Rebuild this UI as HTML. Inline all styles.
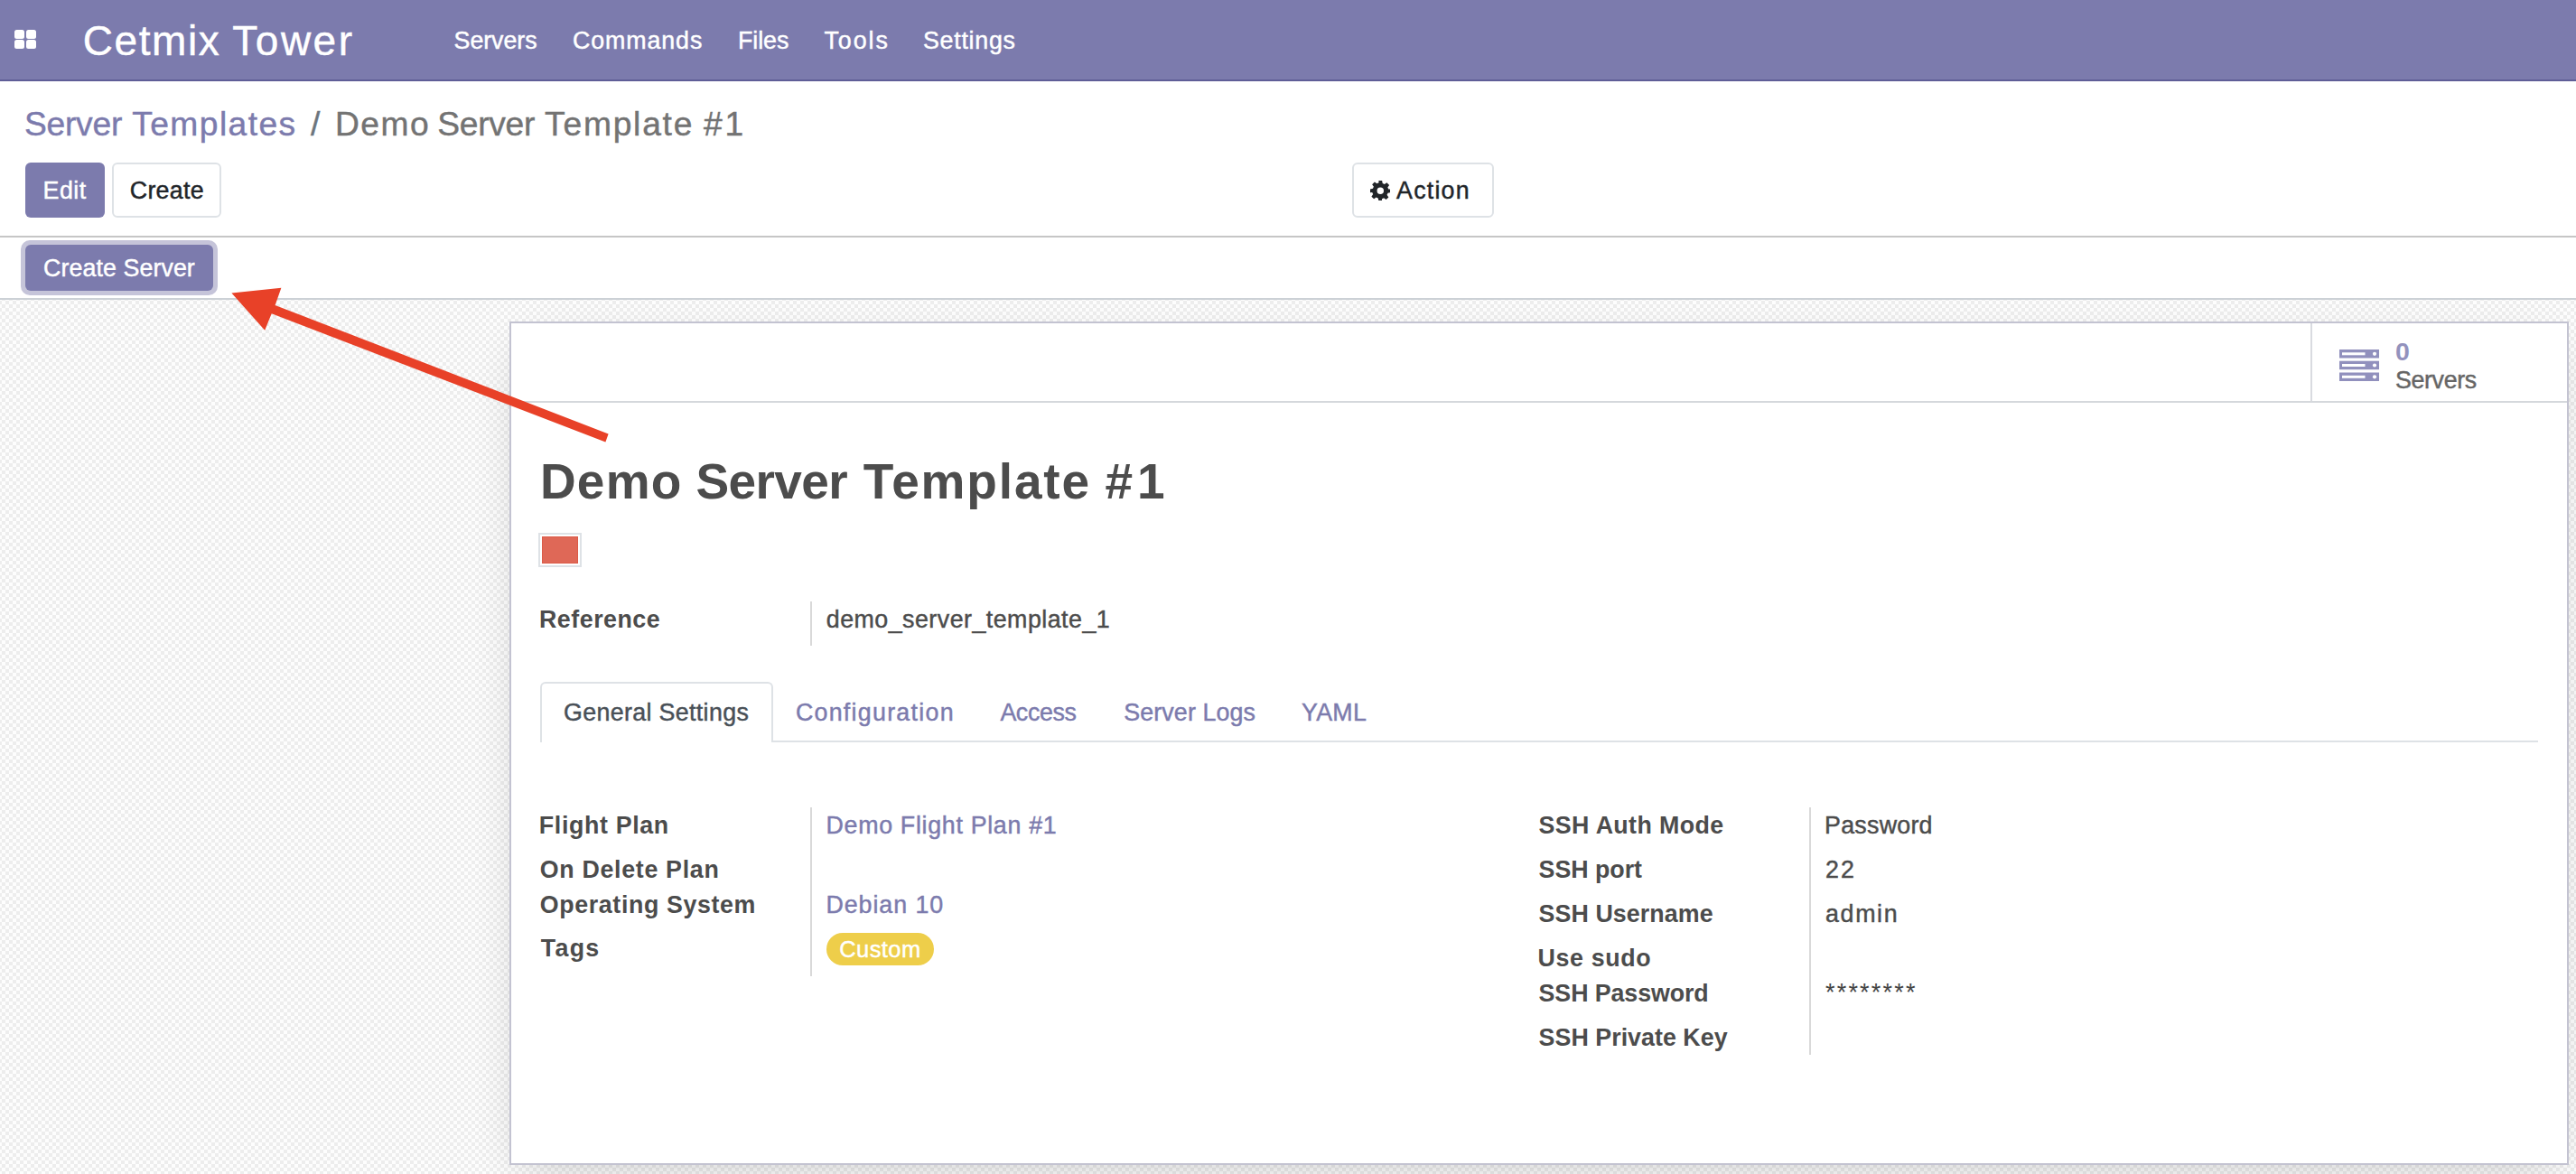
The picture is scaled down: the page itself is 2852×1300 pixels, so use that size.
<!DOCTYPE html>
<html><head><meta charset="utf-8"><title>Demo Server Template #1</title>
<style>
html,body{margin:0;padding:0}
body{width:2852px;height:1300px;overflow:hidden;position:relative;background:#fff;font-family:"Liberation Sans",sans-serif}
.t{position:absolute;white-space:pre;font-family:"Liberation Sans",sans-serif;z-index:5;-webkit-text-stroke:0.45px currentColor}
.a{position:absolute}
#nav{left:0;top:0;width:2852px;height:88px;background:#7C7BAD;border-bottom:2px solid #5F5E97}
.sq{position:absolute;background:#fff;border-radius:2.5px;width:11px;height:10px}
#bgw{left:0;top:332px;width:2852px;height:968px;overflow:hidden}
#bg{left:-8px;top:-8px;width:2868px;height:984px;
 background-color:#fdfdfd;
 background-image:conic-gradient(#ededed 25%,#fdfdfd 0 50%,#ededed 0 75%,#fdfdfd 0);
 background-size:8px 8px;background-position:2px 1px}
.btn{position:absolute;box-sizing:border-box;border-radius:6px}
#sheet{left:564px;top:356px;width:2280px;height:934px;box-sizing:border-box;background:#fff;border:2px solid #c3c3d1;box-shadow:0 17px 51px -17px rgba(0,0,0,.2)}

</style></head><body>
<div class="a" id="nav"></div>
<div class="sq" style="left:16px;top:33px"></div>
<div class="sq" style="left:29px;top:33px"></div>
<div class="sq" style="left:16px;top:44px"></div>
<div class="sq" style="left:29px;top:44px"></div>
<div class="a" style="left:0;top:261px;width:2852px;height:2px;background:#c6c6c6"></div>
<div class="a" style="left:0;top:330px;width:2852px;height:2px;background:#ccd1d6"></div>
<div class="a" id="bgw"><div class="a" id="bg"></div></div>
<div class="btn" style="left:28px;top:180px;width:88px;height:61px;background:#7C7BAD"></div>
<div class="btn" style="left:124px;top:180px;width:121px;height:61px;border:2px solid #dee2e6;background:#fff"></div>
<div class="btn" style="left:1497px;top:180px;width:157px;height:61px;border:2px solid #dee2e6;background:#fff"></div>
<svg class="a" style="left:1516.5px;top:199.5px" width="22.5" height="22.5" viewBox="0 0 24 24"><path fill="#212529" d="M10 0h4l.6 3.2a9 9 0 0 1 2.3 1l2.7-1.9 2.9 2.9-1.9 2.7a9 9 0 0 1 1 2.3L24 10v4l-3.2.6a9 9 0 0 1-1 2.3l1.9 2.7-2.9 2.9-2.7-1.9a9 9 0 0 1-2.3 1L14 24h-4l-.6-3.2a9 9 0 0 1-2.3-1l-2.7 1.9-2.9-2.9 1.9-2.7a9 9 0 0 1-1-2.3L0 14v-4l3.2-.6a9 9 0 0 1 1-2.3L2.3 4.4l2.9-2.9 2.7 1.9a9 9 0 0 1 2.3-1zM12 8a4 4 0 1 0 0 8 4 4 0 0 0 0-8z"/></svg>
<div class="btn" style="left:23px;top:266px;width:218px;height:61px;border-radius:10px;background:#c5c4d9"></div>
<div class="btn" style="left:28px;top:271px;width:208px;height:51px;background:#7C7BAD"></div>
<div class="a" id="sheet"></div>
<div class="a" style="left:2558px;top:358px;width:2px;height:86px;background:#d9dbe0"></div>
<div class="a" style="left:566px;top:444px;width:2276px;height:2px;background:#d5d8dc"></div>
<svg class="a" style="left:2590px;top:387px" width="44" height="35" viewBox="0 0 44 35"><g fill="#9190bd"><rect x="0" y="0" width="44" height="9.5"/><rect x="0" y="12.7" width="44" height="9.5"/><rect x="0" y="25.5" width="44" height="9.5"/></g><g fill="#fff"><rect x="3" y="3.3" width="25.5" height="3"/><rect x="3" y="16" width="25.5" height="3"/><rect x="3" y="28.8" width="25.5" height="3"/><circle cx="39" cy="4.8" r="2.1"/><circle cx="39" cy="17.5" r="2.1"/><circle cx="39" cy="30.3" r="2.1"/></g></svg>
<div class="a" style="left:596px;top:590px;width:48px;height:38px;box-sizing:border-box;border:2px solid #dee2e6;background:#fff"></div>
<div class="a" style="left:600px;top:594px;width:40px;height:30px;box-sizing:border-box;background:#df6857;border:1px solid #dc5a47"></div>
<div class="a" style="left:897px;top:666px;width:2px;height:49px;background:#d9d9d9"></div>
<div class="a" style="left:598px;top:820px;width:2212px;height:2px;background:#dee2e6"></div>
<div class="a" style="left:598px;top:755px;width:258px;height:67px;box-sizing:border-box;border:2px solid #dee2e6;border-bottom:0;border-radius:6px 6px 0 0;background:#fff"></div>
<div class="a" style="left:897px;top:894px;width:2px;height:187px;background:#d9d9d9"></div>
<div class="a" style="left:2003px;top:894px;width:2px;height:274px;background:#d9d9d9"></div>
<div class="a" style="left:915px;top:1033px;width:119px;height:36px;border-radius:18px;background:#EECE4A"></div>
<div class="t" style="left:2021px;top:1086px;font-size:27px;line-height:27px;color:#444;letter-spacing:2.2px;-webkit-text-stroke:0">********</div>
<svg class="a" style="left:0;top:0;z-index:10" width="700" height="500" viewBox="0 0 700 500"><path fill="#e84128" d="M256.4 324.5 L311.4 318.8 L304.6 338 L673.6 480.4 L670.4 489.6 L300.7 347.3 L293.2 365.7 Z"/></svg>

<span class="t" style="left:91.7px;top:22.0px;font-size:46px;line-height:46px;letter-spacing:1.582px;color:#fff">Cetmix</span>
<span class="t" style="left:257.3px;top:22.0px;font-size:46px;line-height:46px;letter-spacing:2.499px;color:#fff">Tower</span>
<span class="t" style="left:502.6px;top:31.8px;font-size:26.8px;line-height:26.8px;letter-spacing:-0.059px;color:#fff">Servers</span>
<span class="t" style="left:634.0px;top:31.8px;font-size:26.8px;line-height:26.8px;letter-spacing:0.901px;color:#fff">Commands</span>
<span class="t" style="left:816.9px;top:31.8px;font-size:26.8px;line-height:26.8px;letter-spacing:-0.029px;color:#fff">Files</span>
<span class="t" style="left:912.5px;top:31.8px;font-size:26.8px;line-height:26.8px;letter-spacing:1.934px;color:#fff">Tools</span>
<span class="t" style="left:1022.0px;top:31.8px;font-size:26.8px;line-height:26.8px;letter-spacing:0.736px;color:#fff">Settings</span>
<span class="t" style="left:27.0px;top:119.0px;font-size:37.2px;line-height:37.2px;letter-spacing:-0.252px;color:#7C7BAD">Server</span>
<span class="t" style="left:146.2px;top:119.0px;font-size:37.2px;line-height:37.2px;letter-spacing:1.439px;color:#7C7BAD">Templates</span>
<span class="t" style="left:344.0px;top:119.0px;font-size:37.2px;line-height:37.2px;letter-spacing:0px;color:#6c757d">/</span>
<span class="t" style="left:371.0px;top:119.0px;font-size:37.2px;line-height:37.2px;letter-spacing:1.494px;color:#737373">Demo</span>
<span class="t" style="left:484.3px;top:119.0px;font-size:37.2px;line-height:37.2px;letter-spacing:-0.312px;color:#737373">Server</span>
<span class="t" style="left:603.1px;top:119.0px;font-size:37.2px;line-height:37.2px;letter-spacing:1.774px;color:#737373">Template</span>
<span class="t" style="left:778.9px;top:119.0px;font-size:37.2px;line-height:37.2px;letter-spacing:2.902px;color:#737373">#1</span>
<span class="t" style="left:47.6px;top:198.3px;font-size:26.8px;line-height:26.8px;letter-spacing:0.471px;color:#fff">Edit</span>
<span class="t" style="left:143.8px;top:198.3px;font-size:26.8px;line-height:26.8px;letter-spacing:0.262px;color:#212529">Create</span>
<span class="t" style="left:1546.1px;top:197.7px;font-size:26.8px;line-height:26.8px;letter-spacing:1.202px;color:#212529">Action</span>
<span class="t" style="left:48.0px;top:284.3px;font-size:26.8px;line-height:26.8px;letter-spacing:0.082px;color:#fff">Create Server</span>
<span class="t" style="left:2651.9px;top:375.0px;font-size:28.5px;line-height:28.5px;font-weight:bold;-webkit-text-stroke:0;letter-spacing:0px;color:#9392bd">0</span>
<span class="t" style="left:2651.9px;top:408.0px;font-size:26.8px;line-height:26.8px;letter-spacing:-0.325px;color:#666666">Servers</span>
<span class="t" style="left:597.9px;top:506.0px;font-size:55px;line-height:55px;font-weight:bold;-webkit-text-stroke:0;letter-spacing:1.24px;color:#4c4c4c">Demo</span>
<span class="t" style="left:770.4px;top:506.0px;font-size:55px;line-height:55px;font-weight:bold;-webkit-text-stroke:0;letter-spacing:-0.608px;color:#4c4c4c">Server</span>
<span class="t" style="left:955.8px;top:506.0px;font-size:55px;line-height:55px;font-weight:bold;-webkit-text-stroke:0;letter-spacing:1.848px;color:#4c4c4c">Template</span>
<span class="t" style="left:1223.4px;top:506.0px;font-size:55px;line-height:55px;font-weight:bold;-webkit-text-stroke:0;letter-spacing:5.094px;color:#4c4c4c">#1</span>
<span class="t" style="left:597.0px;top:673.4px;font-size:26.8px;line-height:26.8px;font-weight:bold;-webkit-text-stroke:0;letter-spacing:0.513px;color:#4c4c4c">Reference</span>
<span class="t" style="left:914.8px;top:673.4px;font-size:26.8px;line-height:26.8px;letter-spacing:0.477px;color:#4c4c4c">demo_server_template_1</span>
<span class="t" style="left:624.1px;top:776.3px;font-size:26.8px;line-height:26.8px;letter-spacing:0.34px;color:#495057">General Settings</span>
<span class="t" style="left:880.9px;top:776.3px;font-size:26.8px;line-height:26.8px;letter-spacing:1.274px;color:#7C7BAD">Configuration</span>
<span class="t" style="left:1107.4px;top:776.3px;font-size:26.8px;line-height:26.8px;letter-spacing:-0.392px;color:#7C7BAD">Access</span>
<span class="t" style="left:1244.3px;top:776.3px;font-size:26.8px;line-height:26.8px;letter-spacing:0.119px;color:#7C7BAD">Server Logs</span>
<span class="t" style="left:1441.0px;top:776.3px;font-size:26.8px;line-height:26.8px;letter-spacing:0.3px;color:#7C7BAD">YAML</span>
<span class="t" style="left:596.8px;top:901.3px;font-size:26.8px;line-height:26.8px;font-weight:bold;-webkit-text-stroke:0;letter-spacing:0.648px;color:#4c4c4c">Flight Plan</span>
<span class="t" style="left:597.8px;top:949.5px;font-size:26.8px;line-height:26.8px;font-weight:bold;-webkit-text-stroke:0;letter-spacing:0.679px;color:#4c4c4c">On Delete Plan</span>
<span class="t" style="left:597.8px;top:989.2px;font-size:26.8px;line-height:26.8px;font-weight:bold;-webkit-text-stroke:0;letter-spacing:0.62px;color:#4c4c4c">Operating System</span>
<span class="t" style="left:598.8px;top:1037.3px;font-size:26.8px;line-height:26.8px;font-weight:bold;-webkit-text-stroke:0;letter-spacing:1.283px;color:#4c4c4c">Tags</span>
<span class="t" style="left:914.5px;top:901.3px;font-size:26.8px;line-height:26.8px;letter-spacing:0.688px;color:#7C7BAD">Demo Flight Plan #1</span>
<span class="t" style="left:914.5px;top:989.2px;font-size:26.8px;line-height:26.8px;letter-spacing:0.933px;color:#7C7BAD">Debian 10</span>
<span class="t" style="left:929.2px;top:1038.9px;font-size:25.5px;line-height:25.5px;letter-spacing:0.424px;color:#fff">Custom</span>
<span class="t" style="left:1703.6px;top:901.4px;font-size:26.8px;line-height:26.8px;font-weight:bold;-webkit-text-stroke:0;letter-spacing:0.375px;color:#4c4c4c">SSH Auth Mode</span>
<span class="t" style="left:1703.6px;top:950.0px;font-size:26.8px;line-height:26.8px;font-weight:bold;-webkit-text-stroke:0;letter-spacing:-0.036px;color:#4c4c4c">SSH port</span>
<span class="t" style="left:1703.6px;top:998.5px;font-size:26.8px;line-height:26.8px;font-weight:bold;-webkit-text-stroke:0;letter-spacing:0.076px;color:#4c4c4c">SSH Username</span>
<span class="t" style="left:1702.6px;top:1047.8px;font-size:26.8px;line-height:26.8px;font-weight:bold;-webkit-text-stroke:0;letter-spacing:0.618px;color:#4c4c4c">Use sudo</span>
<span class="t" style="left:1703.6px;top:1086.7px;font-size:26.8px;line-height:26.8px;font-weight:bold;-webkit-text-stroke:0;letter-spacing:-0.093px;color:#4c4c4c">SSH Password</span>
<span class="t" style="left:1703.6px;top:1136.0px;font-size:26.8px;line-height:26.8px;font-weight:bold;-webkit-text-stroke:0;letter-spacing:0.034px;color:#4c4c4c">SSH Private Key</span>
<span class="t" style="left:2020.1px;top:901.4px;font-size:26.8px;line-height:26.8px;letter-spacing:0.251px;color:#4c4c4c">Password</span>
<span class="t" style="left:2021.1px;top:950.0px;font-size:26.8px;line-height:26.8px;letter-spacing:2.086px;color:#4c4c4c">22</span>
<span class="t" style="left:2021.1px;top:998.5px;font-size:26.8px;line-height:26.8px;letter-spacing:1.621px;color:#4c4c4c">admin</span>
</body></html>
